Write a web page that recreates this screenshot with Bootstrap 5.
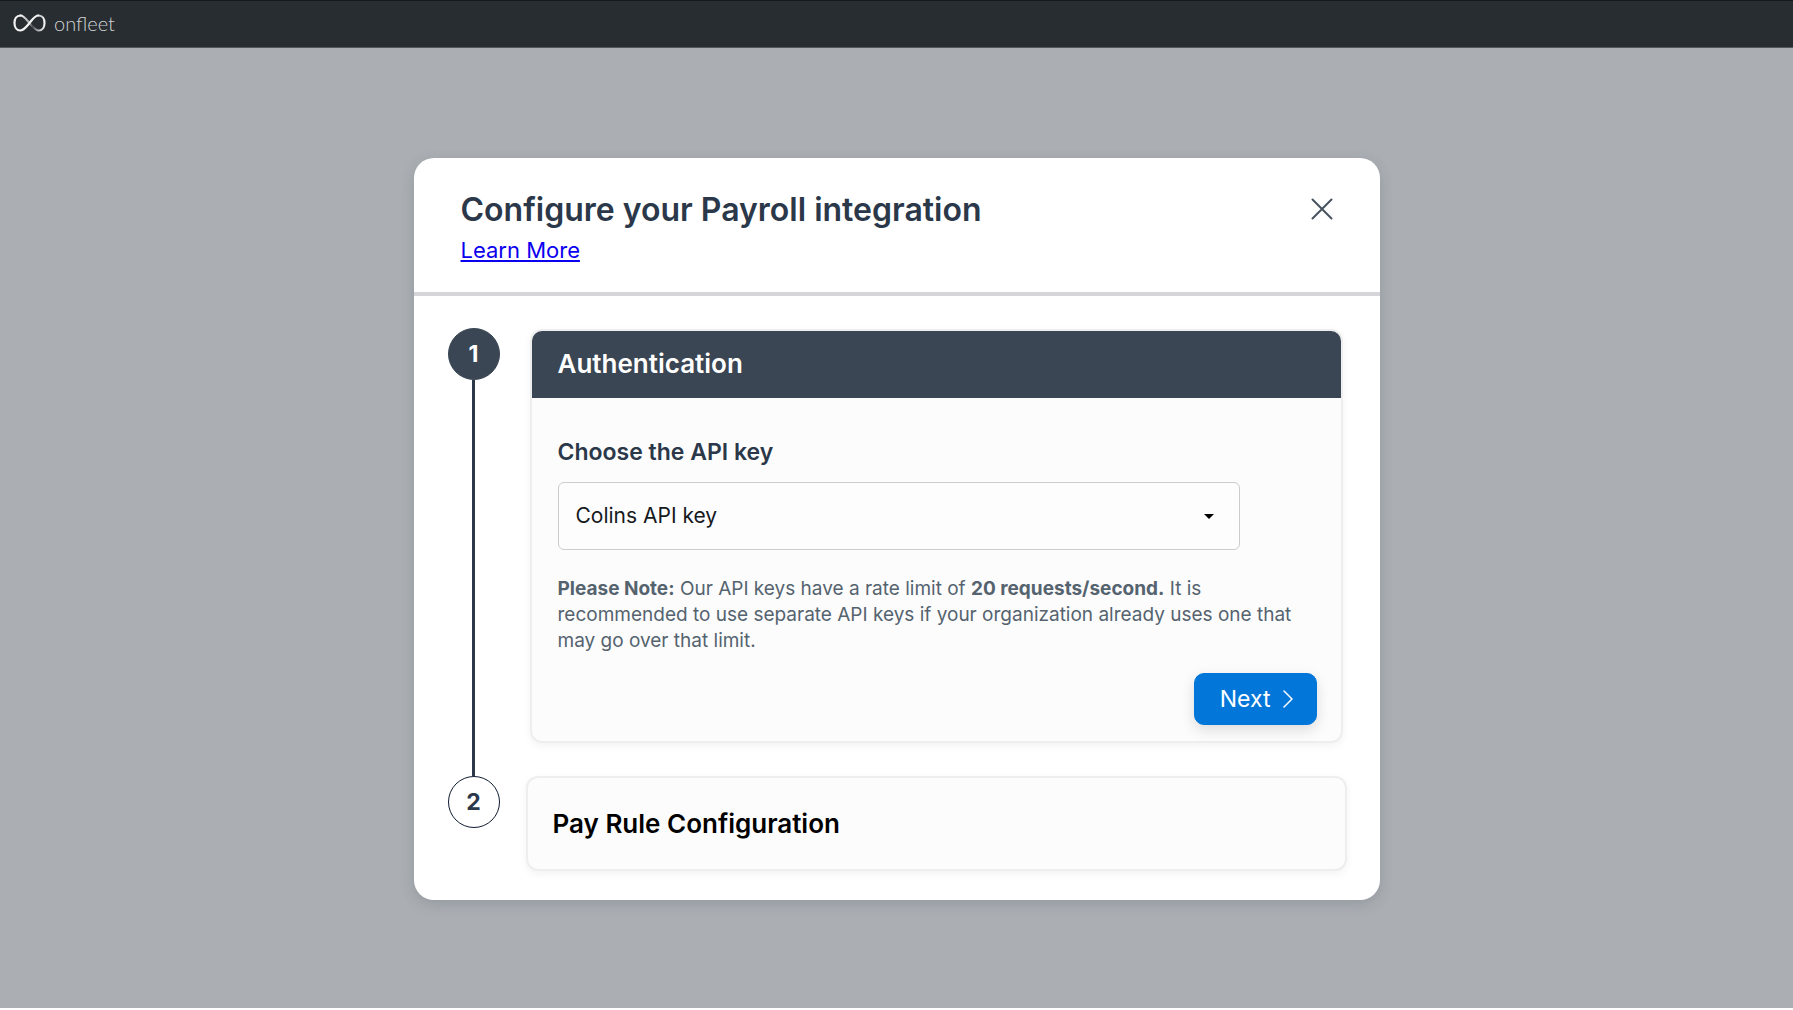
<!DOCTYPE html>
<html lang="en">
<head>
<meta charset="utf-8">
<meta name="viewport" content="width=device-width, initial-scale=1">
<title>Onfleet – Payroll integration</title>
<link href="https://cdn.jsdelivr.net/npm/bootstrap@5.3.0/dist/css/bootstrap.min.css" rel="stylesheet">
<style>
  :root { --slate: #3a4653; --ink: #2b384a; --muted: #55636f; }
  body { font-family: Inter, "Noto Sans", sans-serif; color: var(--ink); padding-bottom: 2px; }
  .topbar { height: 48px; background: #282d31; border-top: 1px solid #15191d; border-bottom: 1px solid #55585c; padding: 0 13px 2px; }
  .brand-name { font-family: Lato, sans-serif; font-size: 20px; line-height: 24px; font-weight: 300; color: #d0d2d4; }
  .backdrop-area { background: #abafb4; padding: 110px 16px 108px; }
  .dialog-panel { max-width: 966px; border-radius: 20px; box-shadow: 0 4px 14px rgba(60,70,80,.2); }
  .dialog-head { padding: 32px 47px 26px; border-bottom: 4px solid #d5d5da; }
  .dialog-title { font-size: 32px; line-height: 40px; font-weight: 600; }
  .learn-link { font-size: 22px; line-height: 32px; color: #0b00ee; }
  .close-btn { line-height: 0; color: #46535f; }
  .dialog-steps { padding: 32px 33px 29px 34px; }
  .step-row { gap: 26px; }
  .step-dot { width: 52px; height: 52px; border: 1px solid #0f1c2f; font-size: 23px; font-weight: 700; }
  .step-dot.is-active { background: var(--slate); border-color: var(--slate); color: #fff; }
  .step-line { width: 3px; background: var(--ink); }
  .step-card { background: #fcfcfc; border: 2px solid #eee; border-radius: 12px; box-shadow: 0 3px 8px rgba(0,0,0,.05); }
  .step-card.is-open { margin: 1px 4px 33px; }
  .step-title { font-size: 26px; line-height: 32px; font-weight: 600; }
  .step-card-head { background: var(--slate); color: #fff; padding: 17px 26px 18px; border-radius: 10px 10px 0 0; }
  .step-card-body { padding: 38px 24px 16px 26px; }
  .step-closed { color: #000; padding: 30px 25px 29px; }
  .field-label { font-size: 23px; line-height: 32px; font-weight: 600; margin-bottom: 14px; }
  .key-select { max-width: 682px; height: 68px; font-size: 21px; padding: 0 48px 0 17px; color: #16191d; background-color: #fdfdfd; border: 1px solid #ccc; border-radius: 6px;
    background-image: url("data:image/svg+xml,%3Csvg xmlns='http://www.w3.org/2000/svg' viewBox='0 0 10 5'%3E%3Cpath d='M0 0h10L5 5z'/%3E%3C/svg%3E"); background-size: 10px 5px; background-position: right 25px center; }
  .key-note { font-size: 19px; line-height: 26px; color: var(--muted); margin: 26px 0 19px; }
  .next-btn { --bs-btn-color: #fff; --bs-btn-bg: #0377d9; --bs-btn-border-color: #0377d9; --bs-btn-hover-color: #fff; --bs-btn-hover-bg: #0268c0; height: 52px; font-size: 23px; line-height: 32px; padding: 0 23px 0 25px; gap: 12px; border-radius: 10px; box-shadow: 0 5px 14px rgba(0,0,0,.13); }
</style>
</head>
<body class="d-flex flex-column min-vh-100">
<header class="topbar d-flex align-items-center">
  <a href="#" class="d-flex align-items-center gap-2 text-decoration-none">
    <svg width="33" height="18" viewBox="0 0 33 18" fill="none" stroke-width="2.2" stroke-linecap="round" aria-hidden="true">
      <defs>
        <linearGradient id="fade" x1="0" x2="1"><stop offset="0" stop-color="#fff"/><stop offset=".35" stop-color="#a0a3a6"/><stop offset=".5" stop-color="#4c5054"/><stop offset=".68" stop-color="#a0a3a6"/><stop offset="1" stop-color="#f0f0f0"/></linearGradient>
      </defs>
      <path d="M7.500 1.500C11 1.500 13 5 16.500 9S22 16.500 26 16.500C29.500 16.500 31.500 13 31.500 9S29.500 1.500 25.500 1.500" stroke="url(#fade)"/>
      <path d="M7.500 1.500C3.500 1.500 1.500 5 1.500 9s2 7.500 5.500 7.500c4 0 6.500-4 9.500-7.500S21.500 1.500 25.500 1.500" stroke="#f2f3f3"/>
    </svg>
    <span class="brand-name">onfleet</span>
  </a>
</header>
<main class="backdrop-area flex-grow-1">
  <section class="dialog-panel bg-white mx-auto" role="dialog" aria-labelledby="dlgTitle">
    <div class="dialog-head d-flex justify-content-between align-items-start">
      <div class="d-flex flex-column align-items-start">
        <h1 class="dialog-title mb-1" id="dlgTitle">Configure your Payroll integration</h1>
        <a href="#" class="learn-link">Learn More</a>
      </div>
      <button type="button" class="close-btn btn border-0 p-0 mt-2" aria-label="Close">
        <svg width="22" height="22" viewBox="0 0 22 22" fill="none" stroke="currentColor" stroke-width="2" stroke-linecap="round"><path d="M1.500 1.500l19 19M20.500 1.500l-19 19"/></svg>
      </button>
    </div>
    <div class="dialog-steps">
      <div class="step-row d-flex">
        <div class="d-flex flex-column align-items-center flex-shrink-0">
          <div class="step-dot is-active rounded-circle d-flex align-items-center justify-content-center">1</div>
          <div class="step-line flex-grow-1"></div>
        </div>
        <div class="step-card is-open flex-grow-1">
          <div class="step-card-head"><h2 class="step-title mb-0">Authentication</h2></div>
          <form class="step-card-body">
            <label for="apiKey" class="field-label d-block">Choose the API key</label>
            <select id="apiKey" class="key-select form-select"><option>Colins API key</option></select>
            <p class="key-note"><strong>Please Note:</strong> Our API keys have a rate limit of <strong>20 requests/second.</strong> It is recommended to use separate API keys if your organization already uses one that may go over that limit.</p>
            <div class="d-flex justify-content-end">
              <button type="button" class="next-btn btn d-flex align-items-center">Next
                <svg width="10" height="18" viewBox="0 0 10 18" fill="none" stroke="currentColor" stroke-width="1.500" stroke-linecap="round" stroke-linejoin="round" aria-hidden="true"><path d="M1 1l8 8-8 8"/></svg>
              </button>
            </div>
          </form>
        </div>
      </div>
      <div class="step-row d-flex">
        <div class="flex-shrink-0">
          <div class="step-dot rounded-circle d-flex align-items-center justify-content-center">2</div>
        </div>
        <div class="step-card step-closed flex-grow-1"><h2 class="step-title mb-0">Pay Rule Configuration</h2></div>
      </div>
    </div>
  </section>
</main>
<script src="https://cdn.jsdelivr.net/npm/bootstrap@5.3.0/dist/js/bootstrap.bundle.min.js"></script>
</body>
</html>
